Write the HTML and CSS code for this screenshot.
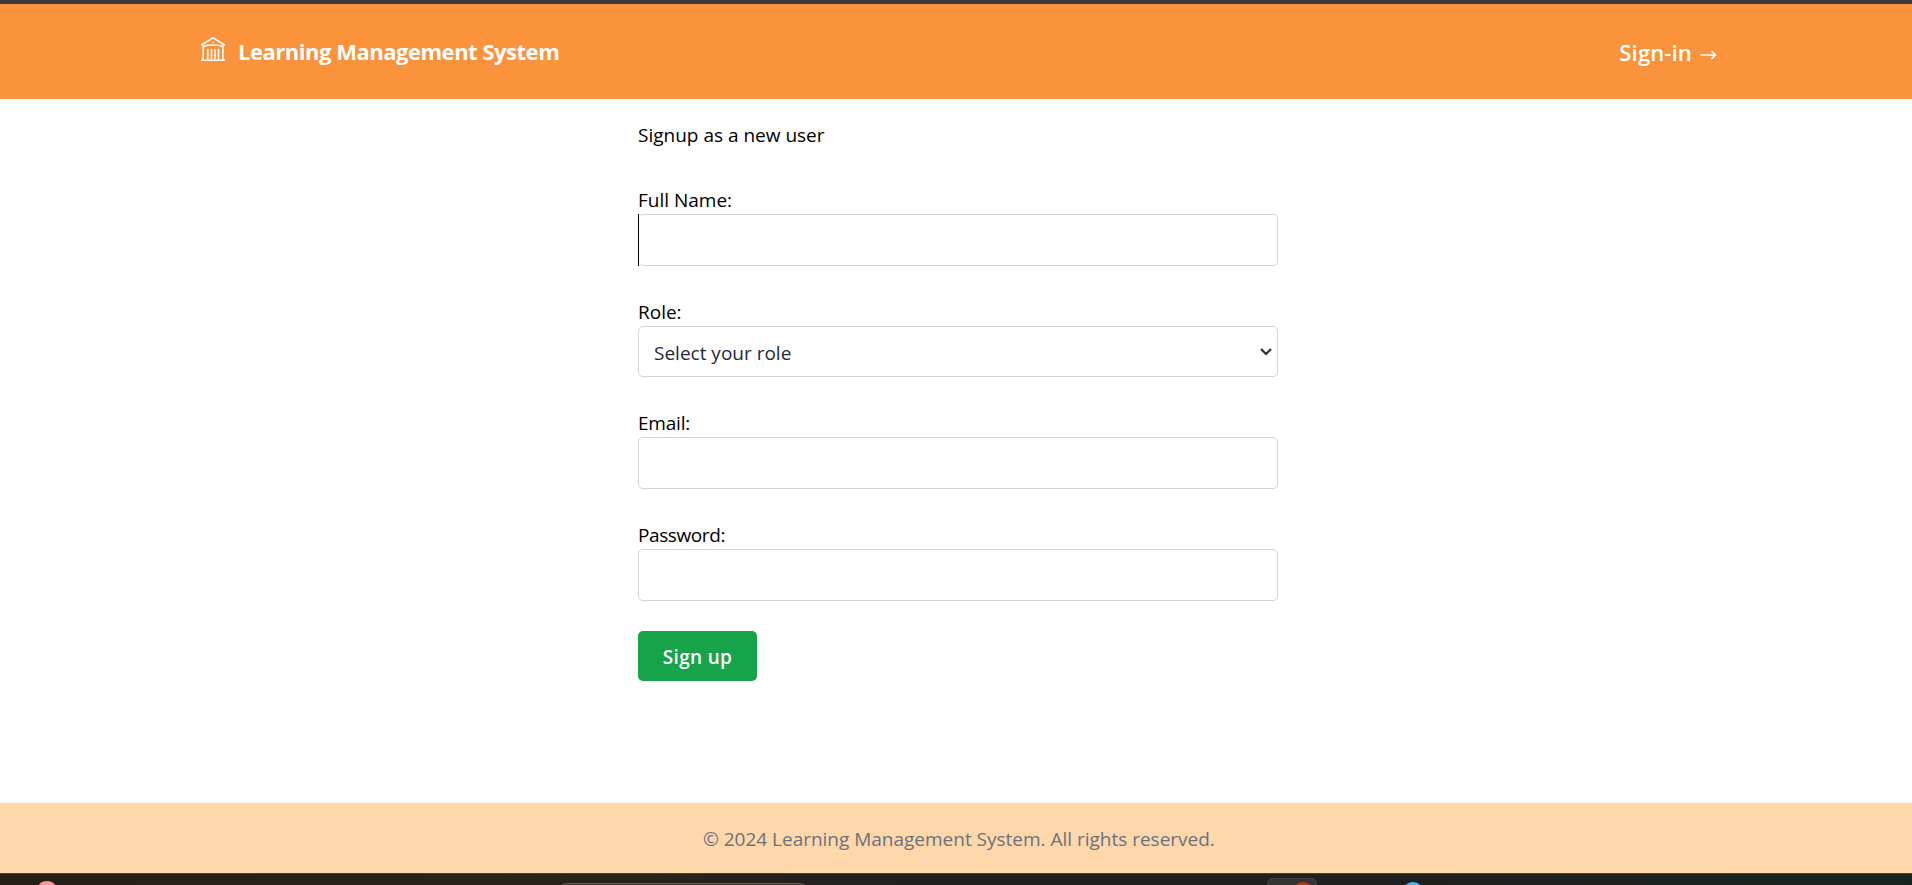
FILE: index.html
```html
<!DOCTYPE html>
<html lang="en">
<head>
<meta charset="utf-8">
<title>Learning Management System</title>
<link rel="stylesheet" href="styles.css">
</head>
<body>
<div class="page">
  <div class="window-edge"></div>
  <header class="header">
    <div class="brand">
      <svg class="brand-icon" width="24" height="24" viewBox="0 0 24 24" fill="none" stroke="#fff" stroke-width="1.6" stroke-linecap="round" stroke-linejoin="round">
        <path d="M0.500 8 12 .8l11.500 7.200M.5 23.300h23M2.200 23V9.400M21.800 23V9.400M6.700 21.500v-9M10.500 21.500v-9M14 21.500v-9M17.500 21.500v-9"/>
        <path d="M2.200 9.400C8 7.700 16 7.700 21.800 9.400M12 5.300h.01"/>
      </svg>
      <span class="brand-name">Learning Management System</span>
    </div>
    <a class="signin"><span class="signin-text">Sign-in</span>
      <svg class="signin-arrow" width="17" height="10" viewBox="0 0 17 10" fill="none" stroke="#fff" stroke-width="1.500"><path d="M.5 5h15M11.500 1l4 4-4 4"/></svg>
    </a>
  </header>
  <main class="main">
    <form class="form">
      <p class="intro">Signup as a new user</p>
      <div class="field"><label class="label" for="name">Full Name:</label><div class="name-wrap"><input class="input" id="name" type="text"></div></div>
      <div class="field"><label class="label" for="role">Role:</label>
        <div class="select-wrap">
          <select class="input select" id="role"><option>Select your role</option></select>
          <svg class="chevron" width="12" height="8" viewBox="0 0 12 8" fill="none" stroke="#1f2937" stroke-width="2"><path d="M1 1l5 5 5-5"/></svg>
        </div>
      </div>
      <div class="field"><label class="label label-email" for="email">Email:</label><input class="input" id="email" type="email"></div>
      <div class="field"><label class="label label-password" for="password">Password:</label><input class="input" id="password" type="password"></div>
      <button class="button" type="button">Sign up</button>
    </form>
  </main>
  <footer class="footer"><span class="copyright">© 2024 Learning Management System. All rights reserved.</span></footer>
  <div class="taskbar">
    <span class="dot dot-pink"></span>
    <span class="search"></span>
    <span class="tile"><span class="dot dot-red"></span></span>
    <span class="dot dot-blue"></span>
  </div>
</div>
</body>
</html>
```
FILE: styles.css
```css
* { box-sizing: border-box; }
body { margin: 0; font-family: "Open Sans", "Noto Sans", sans-serif; font-size: 19px; color: #000; background: #fff; overflow: hidden; }
.page { height: 885px; display: flex; flex-direction: column; overflow: hidden; }
.window-edge { height: 4px; flex: none; background: #3c3c3c; }
.header { height: 95px; flex: none; padding: 0 195px 0 201px; background: #fb923c; color: #fff; display: flex; justify-content: space-between; }
.brand { display: flex; align-items: flex-start; gap: 13px; padding-top: 33px; }
.brand-name { font-size: 22px; font-weight: 700; line-height: 30px; letter-spacing: -0.48px; margin-top: -1px; white-space: nowrap; }
.signin { font-size: 22px; font-weight: 600; line-height: 30px; letter-spacing: 0.15px; padding-top: 33px; white-space: nowrap; display: flex; gap: 8px; }
.signin-arrow { margin-top: 13px; }
.main { flex: 1; padding-left: 638px; padding-top: 21px; }
.form { width: 640px; }
.intro { margin: 0 0 34px; line-height: 30px; }
.field { margin-bottom: 30px; }
.label { display: block; height: 30px; line-height: 32px; }
.label-email { letter-spacing: -0.2px; }
.label-password { letter-spacing: -0.4px; }
.input { display: block; width: 640px; height: 52px; border: 1px solid #d1d5db; border-radius: 5px; background: #fff; padding: 0 15px; font: inherit; color: #1f2937; outline: none; }
.name-wrap { background: linear-gradient(#000, #000) left / 1px 100% no-repeat; }
.name-wrap .input { border-left-color: transparent; background-clip: padding-box; }
.select-wrap { position: relative; }
.select { height: 51px; padding-top: 2px; appearance: none; }
.chevron { position: absolute; right: 6px; top: 22px; }
.button { display: block; width: 119px; height: 50px; padding: 2px 0 0; border: 0; border-radius: 5px; background: #16a34a; color: #fff; font: 600 19px "Open Sans", sans-serif; letter-spacing: 0.3px; }
.footer { height: 70px; flex: none; background: #fed7aa; color: #6b7280; padding-top: 21px; padding-left: 703px; line-height: 30px; letter-spacing: -0.01px; white-space: nowrap; }
.taskbar { height: 12px; flex: none; position: relative; overflow: hidden; background: linear-gradient(90deg, #261f18, #2a2319 32%, #21211f 45%, #1f201e 75%, #18231f); border-top: 1px solid #454545; }
.dot { position: absolute; width: 22px; height: 22px; border-radius: 50%; }
.dot-pink { left: 36px; top: 7px; background: #ff919d; }
.search { position: absolute; left: 553px; top: 9px; width: 261px; height: 30px; border-radius: 15px; border: 1px solid #655f57; background: #39332c; }
.tile { position: absolute; left: 1267px; top: 4px; width: 50px; height: 30px; border-radius: 6px; background: #343432; border: 1px solid #444; }
.dot-red { left: 24px; top: 3px; background: #b93412; }
.dot-blue { left: 1402px; top: 8px; background: #43b8f7; }
```
